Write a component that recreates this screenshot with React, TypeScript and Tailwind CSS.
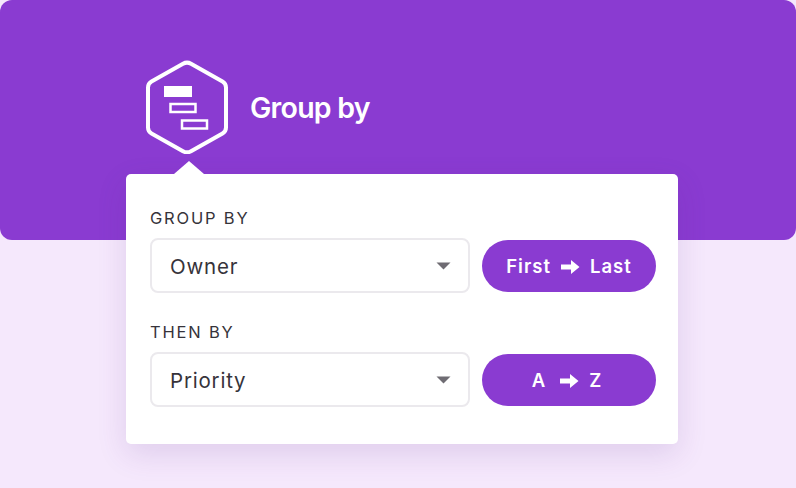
import React from 'react';

const Arrow = () => (
  <svg width="19" height="16" viewBox="0 0 19 16" className="block">
    <path d="M0 5.500h10V1l8.500 7-8.500 7v-4.500H0z" fill="#fff" />
  </svg>
);

const Caret = () => (
  <svg width="15" height="8" viewBox="0 0 15 8" className="block">
    <path d="M0.500 0.500h14L7.500 7.500z" fill="#6f6c73" />
  </svg>
);

const HexLogo = () => (
  <svg width="84" height="94" viewBox="0 0 84 94" className="block">
    <path
      d="M38 3.800a8 8 0 0 1 8 0l31.500 17.700a7 7 0 0 1 3.500 6v40a7 7 0 0 1-3.500 6l-31.500 17.700a8 8 0 0 1-8 0l-31.500-17.700a7 7 0 0 1-3.500-6v-40a7 7 0 0 1 3.500-6z"
      fill="none"
      stroke="#fff"
      strokeWidth="4"
    />
    <rect x="19" y="26" width="28" height="11" fill="#fff" />
    <rect x="25.500" y="44" width="25" height="8" fill="none" stroke="#fff" strokeWidth="2.500" />
    <rect x="37" y="60.500" width="25" height="8" fill="none" stroke="#fff" strokeWidth="2.500" />
  </svg>
);

const Row = ({ label, value, left, right, wide }: { label: string; value: string; left: string; right: string; wide?: boolean }) => (
  <div>
    <div className="text-[16.500px] leading-[18px] tracking-[1.800px] text-[#36333a]">{label}</div>
    <div className="flex items-start gap-3 mt-[11px]">
      <div className="w-[320px] h-[55px] bg-white border-2 border-[#ebe9ed] rounded-[8px] flex items-center justify-between pl-[18px] pr-[17px]">
        <span className="text-[20.500px] leading-[26px] mt-0.5 text-[#36333a] tracking-[0.800px]">{value}</span>
        <Caret />
      </div>
      <div className="w-[174px] h-[52px] mt-0.5 pt-0.5 rounded-full bg-[#8a3bd1] flex items-center justify-center gap-[10px] text-white text-[18.500px] font-semibold tracking-[1px]">
        <span className={wide ? 'mr-1' : ''}>{left}</span>
        <Arrow />
        <span className={wide ? 'mr-1' : ''}>{right}</span>
      </div>
    </div>
  </div>
);

export default function App() {
  return (
    <div className="w-[796px] h-[488px] overflow-hidden bg-[#f5e8fc] font-['Inter',sans-serif]">
      <div className="h-[240px] bg-[#8a3bd1] rounded-[12px] pl-[145px] pt-[60px] flex items-start gap-[21px]">
        <HexLogo />
        <span className="text-[28.500px] leading-[96px] font-semibold text-white tracking-[-0.750px]">Group by</span>
      </div>
      <div className="relative mt-[-66px] ml-[126px] w-[552px] h-[270px] bg-white rounded-[5px] shadow-[0_10px_30px_rgba(90,40,140,0.14)] pl-6 pt-[35px] flex flex-col gap-[30px]">
        <div className="absolute left-[48px] top-[-13px] w-0 h-0 border-x-[15px] border-x-transparent border-b-[13px] border-b-white" />
        <Row label="GROUP BY" value="Owner" left="First" right="Last" />
        <Row label="THEN BY" value="Priority" left="A" right="Z" wide />
      </div>
    </div>
  );
}
